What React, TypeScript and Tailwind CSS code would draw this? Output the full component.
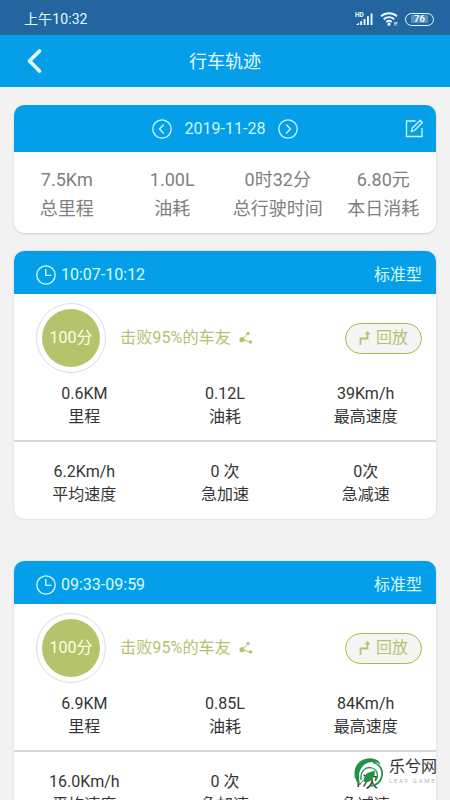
import { ReactNode } from 'react';

type Stat = {
  value: string;
  label: string;
};

type Trip = {
  id: number;
  time: string;
  mode: string;
  score: string;
  rank: string;
  main: Stat[];
  extra: Stat[];
};

const summary: Stat[] = [
  { value: '7.5Km', label: '总里程' },
  { value: '1.00L', label: '油耗' },
  { value: '0时32分', label: '总行驶时间' },
  { value: '6.80元', label: '本日消耗' },
];

const trips: Trip[] = [
  {
    id: 1,
    time: '10:07-10:12',
    mode: '标准型',
    score: '100分',
    rank: '击败95%的车友',
    main: [
      { value: '0.6KM', label: '里程' },
      { value: '0.12L', label: '油耗' },
      { value: '39Km/h', label: '最高速度' },
    ],
    extra: [
      { value: '6.2Km/h', label: '平均速度' },
      { value: '0 次', label: '急加速' },
      { value: '0次', label: '急减速' },
    ],
  },
  {
    id: 2,
    time: '09:33-09:59',
    mode: '标准型',
    score: '100分',
    rank: '击败95%的车友',
    main: [
      { value: '6.9KM', label: '里程' },
      { value: '0.85L', label: '油耗' },
      { value: '84Km/h', label: '最高速度' },
    ],
    extra: [
      { value: '16.0Km/h', label: '平均速度' },
      { value: '0 次', label: '急加速' },
      { value: '1次', label: '急减速' },
    ],
  },
];

const StatusBar = () => (
  <div className="flex h-[35px] items-center justify-between bg-[#22659f] pl-6 pr-4 pt-[3px] text-[#e4fbff]">
    <span className="text-[14px] leading-none tracking-[0.1px]">上午10:32</span>
    <div className="flex items-center">
      <svg width="19" height="16" viewBox="0 0 19 16" className="mr-1.5" fill="currentColor">
        <text x="0" y="5.5" fontSize="6.5" fontWeight="700" fontFamily="Roboto, sans-serif">HD</text>
        <path d="M1 14l3-2.6V14zM5.2 10.2h1.9V14H5.2zM8.6 8h1.9v6H8.6zM12 5.2h1.9V14H12zM15.6 2.4h1.9V14h-1.9z" />
      </svg>
      <svg width="19" height="16" viewBox="0 0 19 16" className="mr-1.5" fill="none" stroke="currentColor" strokeWidth="1.9">
        <path d="M1 5.2c4.6-4 11.4-4 16 0M3.7 8.2c3.1-2.6 7.5-2.6 10.6 0M6.2 10.9c1.7-1.3 3.9-1.3 5.6 0" />
        <circle cx="9" cy="13.2" r="0.7" />
        <path d="M14.2 12.6h3v-1.2h-2.6v2.8h2.6" strokeWidth="0.8" opacity="0.8" />
      </svg>
      <div className="flex h-[13px] w-[29px] items-center justify-center rounded-full border-[1.5px] border-current">
        <span className="bg-[#5c90bc] px-[3px] text-[9.5px] font-bold leading-[8px]">76</span>
      </div>
    </div>
  </div>
);

const NavBar = () => (
  <div className="grid h-[52px] grid-cols-3 items-center bg-[#059fe9] text-[#e8fcff]">
    <svg width="16" height="26" viewBox="0 0 16 26" className="ml-[26px]" fill="none" stroke="currentColor" strokeWidth="3.6" strokeLinecap="round" strokeLinejoin="round">
      <path d="M13.5 3L3.5 13l10 10" />
    </svg>
    <h1 className="pt-0.5 text-center text-lg leading-none">行车轨迹</h1>
  </div>
);

const Circled = ({ children }: { children: ReactNode }) => (
  <svg width="20" height="20" viewBox="0 0 20 20" fill="none" stroke="currentColor" strokeWidth="1.3">
    <circle cx="10" cy="10" r="9.2" />
    {children}
  </svg>
);

const EditIcon = () => (
  <svg width="19" height="19" viewBox="0 0 19 19" fill="none" stroke="currentColor" strokeWidth="1.3">
    <path d="M10.5 2H1.5v15.5h15.5V9" />
    <path d="M6.3 12.6l.9-3.3 8-8 2.2 2.200-8 8z" strokeLinejoin="round" />
  </svg>
);

const SummaryCard = () => (
  <section className="overflow-hidden rounded-[10px] bg-white shadow-[0_1px_2px_#cfcfd2]">
    <div className="grid h-[47px] grid-cols-[1fr_auto_1fr] items-center bg-[#059fe9] px-3 text-[#c9f9ff]">
      <span />
      <div className="flex items-center gap-[13px]">
        <Circled>
          <path d="M11.8 5.5L7.5 10l4.3 4.5" />
        </Circled>
        <span className="text-base leading-none">2019-11-28</span>
        <Circled>
          <path d="M8.2 5.5l4.3 4.5-4.3 4.5" />
        </Circled>
      </div>
      <div className="flex justify-end">
        <EditIcon />
      </div>
    </div>
    <div className="grid h-[81px] grid-cols-4 pt-[13px] text-center text-lg leading-[29px] text-[#808080]">
      {summary.map((item) => (
        <div key={item.label} className="whitespace-nowrap">
          <p>{item.value}</p>
          <p>{item.label}</p>
        </div>
      ))}
    </div>
  </section>
);

const StatRow = ({ items }: { items: Stat[] }) => (
  <div className="grid grid-cols-3 text-center text-base leading-[23px] text-[#353535]">
    {items.map((item) => (
      <div key={item.label}>
        <p>{item.value}</p>
        <p>{item.label}</p>
      </div>
    ))}
  </div>
);

const TripCard = ({ trip }: { trip: Trip }) => (
  <section className="h-[268px] overflow-hidden rounded-[10px] bg-white shadow-[0_0_2px_#c6c6ca]">
    <div className="flex h-[43px] items-center justify-between bg-[#059fe9] pl-[22px] pr-3.5 pt-1 text-base leading-none text-[#d6fbff]">
      <div className="flex items-center gap-[5px]">
        <Circled>
          <path d="M9.8 4v6.4h5.6" />
        </Circled>
        <span>{trip.time}</span>
      </div>
      <span>{trip.mode}</span>
    </div>

    <div className="flex h-[88px] items-center pl-[22px] pr-3.5 text-base leading-none text-[#b5c271]">
      <div className="flex size-[70px] shrink-0 items-center justify-center rounded-full border border-[#dcdce2]">
        <div className="flex size-[58px] items-center justify-center rounded-full bg-[#b5c46c] text-[#fbffe0]">
          {trip.score}
        </div>
      </div>
      <span className="ml-3.5 text-[16.2px]">{trip.rank}</span>
      <svg width="14" height="14" viewBox="0 0 14 14" className="ml-2" fill="currentColor" stroke="currentColor">
        <path d="M9 2.5L3 8.7l8.5 2.3" fill="none" strokeWidth="1" />
        <circle cx="3" cy="8.7" r="2.2" />
        <circle cx="9" cy="2.5" r="1.2" />
        <circle cx="11.5" cy="11" r="1.3" />
      </svg>
      <button className="ml-auto flex h-[31px] w-[77px] items-center rounded-full border-[1.5px] border-[#a9b94e] bg-[#f5f5f3] pl-[13px]">
        <svg width="12" height="16" viewBox="0 0 12 16" className="mr-[5px]" fill="none" stroke="currentColor" strokeWidth="1.8">
          <path d="M1.5 15V8.500h7V3" />
          <path d="M5.500 4.200L8.500 1l3 3.200z" fill="currentColor" stroke="none" />
        </svg>
        <span>回放</span>
      </button>
    </div>

    <div className="h-[60px] border-b-2 border-[#d6d6d8]">
      <StatRow items={trip.main} />
    </div>
    <div className="pt-[18px]">
      <StatRow items={trip.extra} />
    </div>
  </section>
);

const Watermark = () => (
  <div className="absolute left-[353px] top-[757px] flex items-start">
    <svg width="31" height="33" viewBox="0 0 31 33" className="shrink-0" fill="none" stroke="#239149">
      <path d="M24 3C14-2 1 4 1.500 17c.2 5 2.500 9 6 11.500C3 17 8 5 20 5c4 0 6 1 7.500 3C27 6 26 4 24 3z" fill="#239149" stroke="none" />
      <path d="M20 5.500c6 1 10 6.500 9 13-.8 5.500-5 9.500-11 10.500" strokeWidth="1.700" />
      <path d="M8 23c-1-9 5-14 11-12 6 2 7 9 3 13" strokeWidth="1.300" />
      <path d="M11 25c-1-6 2-10 11-11 0 7-4 12-11 11z" fill="#239149" stroke="none" />
      <path d="M6.500 28c2-4 6-6 10-10" strokeWidth="1" />
    </svg>
    <div className="ml-[5px] whitespace-nowrap">
      <p className="text-[16px] leading-[20px] text-[#333]">乐兮网</p>
      <p className="text-[6px] leading-[8px] tracking-[1.7px] text-[#b5b5b5]">LEAF GAME</p>
    </div>
  </div>
);

const App = () => {
  return (
    <div className="relative h-[800px] w-[450px] overflow-hidden bg-[#f2f2f3] font-['Roboto','Noto_Sans_CJK_SC',sans-serif]">
      <StatusBar />
      <NavBar />
      <main className="px-3.5 pt-[18px]">
        <SummaryCard />
        <div className="mt-[18px] flex flex-col gap-[42px]">
          {trips.map((trip) => (
            <TripCard key={trip.id} trip={trip} />
          ))}
        </div>
      </main>
      <Watermark />
    </div>
  );
};

export default App;
